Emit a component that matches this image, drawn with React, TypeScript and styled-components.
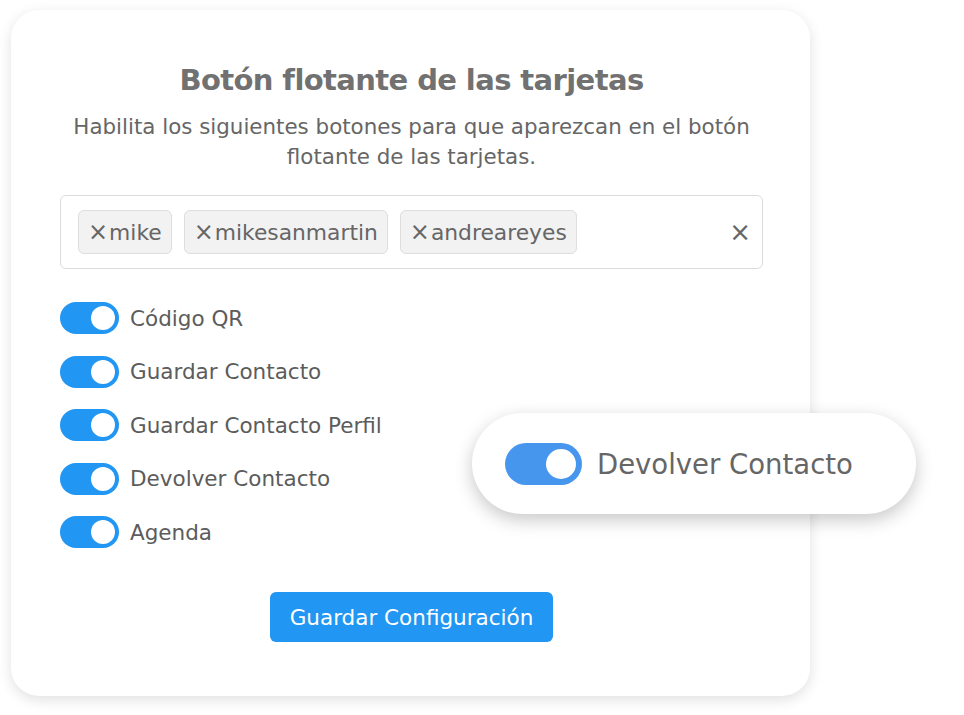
import React from 'react';
import styled, { createGlobalStyle } from 'styled-components';

const GlobalStyle = createGlobalStyle`
  html, body {
    margin: 0;
    padding: 0;
    background: #ffffff;
  }
  body {
    font-family: "DejaVu Sans", "Noto Sans", sans-serif;
    color: #5f5f5f;
  }
`;

const users = ['mike', 'mikesanmartin', 'andreareyes'];
const options = [
  'Código QR',
  'Guardar Contacto',
  'Guardar Contacto Perfil',
  'Devolver Contacto',
  'Agenda',
];

const App: React.FC = () => {
  return (
    <>
      <GlobalStyle />
      <Page>
        <Card>
          <Title>Botón flotante de las tarjetas</Title>
          <Subtitle>
            Habilita los siguientes botones para que aparezcan en el botón
            <br />
            flotante de las tarjetas.
          </Subtitle>
          <TagBox>
            <TagList>
              {users.map((u) => (
                <Tag key={u}>
                  <TagRemove>×</TagRemove>
                  {u}
                </Tag>
              ))}
            </TagList>
            <ClearAll>×</ClearAll>
          </TagBox>
          <OptionList>
            {options.map((o) => (
              <OptionRow key={o}>
                <Switch>
                  <Knob />
                </Switch>
                <OptionLabel>{o}</OptionLabel>
              </OptionRow>
            ))}
          </OptionList>
          <SaveButton>Guardar Configuración</SaveButton>
        </Card>
        <FloatingPill>
          <BigSwitch>
            <BigKnob />
          </BigSwitch>
          <PillLabel>Devolver Contacto</PillLabel>
        </FloatingPill>
      </Page>
    </>
  );
};

export default App;

const Page = styled.div`
  position: relative;
  width: 964px;
  height: 715px;
  padding: 10px 0 0 11px;
  box-sizing: border-box;
`;

const Card = styled.div`
  box-sizing: border-box;
  width: 799px;
  height: 686px;
  border-radius: 28px;
  background: #ffffff;
  box-shadow: 0 4px 14px rgba(0, 0, 0, 0.12);
  padding: 50px 47px 0 49px;
  display: flex;
  flex-direction: column;
  align-items: center;
`;

const Title = styled.h1`
  margin: 0;
  font-size: 29px;
  line-height: 40px;
  font-weight: 600;
  letter-spacing: -0.6px;
  color: #717171;
`;

const Subtitle = styled.p`
  margin: 12px 0 0;
  font-size: 21.4px;
  line-height: 30px;
  text-align: center;
  color: #666666;
`;

const TagBox = styled.div`
  box-sizing: border-box;
  align-self: stretch;
  margin-top: 23px;
  height: 74px;
  border: 1px solid #dcdcdc;
  border-radius: 6px;
  display: flex;
  align-items: center;
  padding: 0 11px 0 17px;
`;

const TagList = styled.div`
  flex: 1;
  display: flex;
  gap: 12px;
`;

const Tag = styled.div`
  box-sizing: border-box;
  height: 44px;
  padding: 0 9px;
  display: flex;
  align-items: center;
  background: #f2f2f2;
  border: 1px solid #dedede;
  border-radius: 6px;
  font-size: 21.8px;
  color: #666666;
`;

const TagRemove = styled.span`
  font-size: 24px;
  margin-right: 1px;
  line-height: 1;
`;

const ClearAll = styled.span`
  font-size: 26px;
  color: #666666;
  line-height: 1;
`;

const OptionList = styled.div`
  align-self: stretch;
  margin-top: 33px;
  display: flex;
  flex-direction: column;
  gap: 21.5px;
`;

const OptionRow = styled.div`
  display: flex;
  align-items: center;
  height: 32px;
`;

const Switch = styled.div`
  box-sizing: border-box;
  width: 59px;
  height: 32px;
  border-radius: 16px;
  background: #2196f3;
  display: flex;
  align-items: center;
  justify-content: flex-end;
  padding-right: 4px;
`;

const Knob = styled.div`
  width: 24px;
  height: 24px;
  border-radius: 50%;
  background: #ffffff;
`;

const OptionLabel = styled.span`
  margin-left: 11px;
  font-size: 21.5px;
  color: #5c5c5c;
`;

const SaveButton = styled.button`
  margin-top: 44px;
  width: 283px;
  height: 50px;
  border: none;
  border-radius: 6px;
  background: #2196f3;
  color: #ffffff;
  font-family: inherit;
  font-size: 21.5px;
  font-weight: 400;
`;

const FloatingPill = styled.div`
  position: absolute;
  left: 472px;
  top: 413px;
  box-sizing: border-box;
  width: 444px;
  height: 101px;
  border-radius: 51px;
  background: #ffffff;
  box-shadow: 0 6px 18px rgba(0, 0, 0, 0.22);
  display: flex;
  align-items: center;
  padding-left: 33px;
`;

const BigSwitch = styled.div`
  box-sizing: border-box;
  width: 77px;
  height: 42px;
  border-radius: 21px;
  background: #4596ec;
  display: flex;
  align-items: center;
  justify-content: flex-end;
  padding-right: 6px;
`;

const BigKnob = styled.div`
  width: 30px;
  height: 30px;
  border-radius: 50%;
  background: #ffffff;
`;

const PillLabel = styled.span`
  margin-left: 15px;
  font-size: 27.5px;
  color: #666666;
`;
